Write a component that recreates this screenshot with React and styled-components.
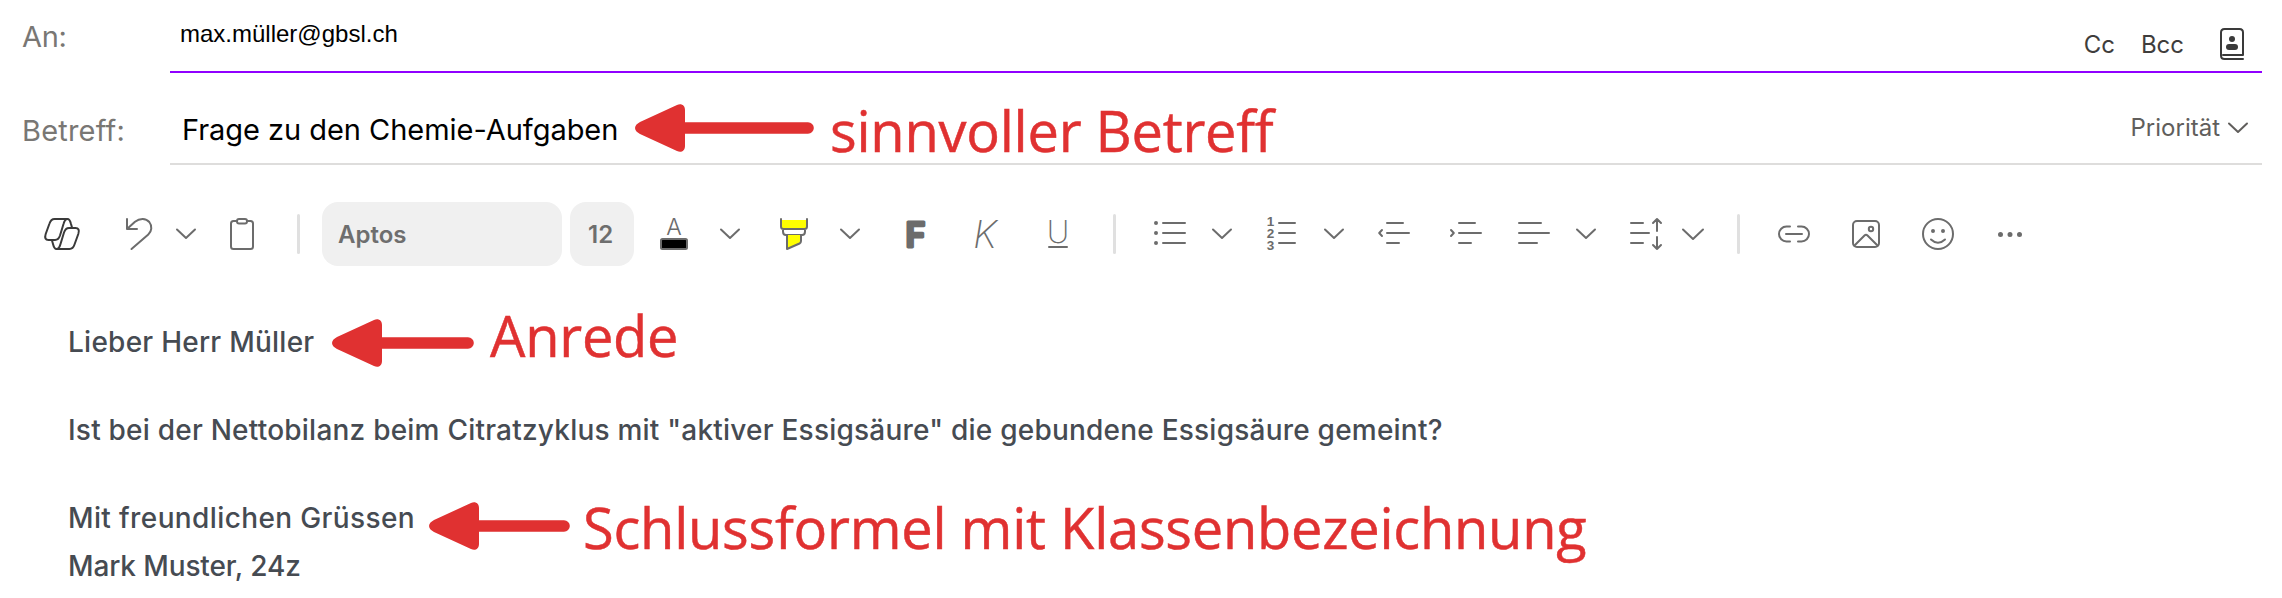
import React from "react";
import styled, { createGlobalStyle } from "styled-components";

const GlobalStyle = createGlobalStyle`
  *, *::before, *::after { box-sizing: border-box; }
  body { margin: 0; background: #fff; font-family: Inter, "Liberation Sans", sans-serif; }
`;

const Composer = styled.main`
  position: relative;
  display: flex;
  flex-direction: column;
  width: 2282px;
  height: 598px;
  overflow: hidden;
  background: #fff;
  white-space: nowrap;
`;

const HeaderRow = styled.div`
  display: flex;
  height: ${(p) => p.$height}px;
  padding-right: 20px;
`;

const Label = styled.label`
  display: flex;
  align-items: center;
  width: 170px;
  padding: ${(p) => p.$top || 0}px 0 0 22px;
  font-size: 29px;
  letter-spacing: ${(p) => p.$tracking || 0}px;
  color: #797774;
`;

const Field = styled.div`
  display: flex;
  flex: 1;
  align-items: center;
  justify-content: space-between;
  padding-top: ${(p) => p.$top || 0}px;
  border-bottom: 2px solid ${(p) => (p.$active ? "#9000ff" : "#dedddc")};
`;

const Recipient = styled.span`
  margin-bottom: 4px;
  padding-left: 10px;
  font: 24px/28px "Liberation Sans", Arial, sans-serif;
  color: #000;
`;

const Subject = styled.span`
  padding-left: 12px;
  font-size: 29px;
  line-height: 36px;
  letter-spacing: -0.04px;
  color: #000;
`;

const RecipientActions = styled.div`
  display: flex;
  align-items: center;
  margin: 17px 18px 0 0;
`;

const TextAction = styled.button`
  margin: 1px ${(p) => p.$after}px 0 0;
  padding: 0;
  border: 0;
  background: none;
  font: 24px/30px Inter, sans-serif;
  color: #3f3d3c;
`;

const Priority = styled.button`
  display: flex;
  align-items: center;
  gap: 8px;
  margin: 0 14px 4px 0;
  padding: 0;
  border: 0;
  background: none;
  font: 24px/30px Inter, sans-serif;
  color: #605e5c;
`;

const Toolbar = styled.div`
  display: flex;
  align-items: center;
  height: 64px;
  margin-top: 37px;
  padding-left: 44px;
`;

const Tool = styled.button`
  display: flex;
  flex: none;
  margin: 0 0 0 ${(p) => p.$gap || 0}px;
  padding: 0;
  border: 0;
  background: none;
  color: ${(p) => (p.$dark ? "#3a3a3a" : "#6c6c6c")};
`;

const Glyph = styled.svg`
  display: block;
  flex: none;
  overflow: visible;
  fill: none;
  stroke: currentColor;
  stroke-width: 2;
  stroke-linecap: round;
  stroke-linejoin: round;
  text { fill: currentColor; stroke: none; }
`;

const BoldGlyph = styled(Glyph)`
  text { stroke: currentColor; stroke-width: 3; }
`;

const Separator = styled.div`
  flex: none;
  width: 3px;
  height: 40px;
  margin-left: ${(p) => p.$gap}px;
  border-radius: 2px;
  background: #e0e0e0;
`;

const Picker = styled.div`
  display: flex;
  flex: none;
  align-items: center;
  width: ${(p) => p.$width}px;
  height: 64px;
  margin-left: ${(p) => p.$gap}px;
  padding-left: ${(p) => p.$inset}px;
  border-radius: 16px;
  background: #f0f0f0;
  font-size: 24px;
  font-weight: 600;
  color: #6e6e6e;
`;

const Message = styled.div`
  display: flex;
  flex-direction: column;
  gap: 40px;
  padding: 52px 0 0 68px;
  font-size: 28px;
  font-weight: 500;
  line-height: 48px;
  color: #464b52;
`;

const Paragraph = styled.p`
  margin: 0;
  letter-spacing: ${(p) => p.$tracking}px;
`;

const Line = styled.span`
  display: block;
  letter-spacing: ${(p) => p.$tracking}px;
`;

const Note = styled.div`
  position: absolute;
  left: ${(p) => p.$x}px;
  top: ${(p) => p.$y}px;
  display: flex;
  align-items: flex-start;
  gap: ${(p) => p.$gap}px;
  color: #e03131;
`;

const NoteText = styled.span`
  margin-top: ${(p) => p.$shift}px;
  font: 56px/48px "Open Sans", sans-serif;
  letter-spacing: -0.25px;
  -webkit-text-stroke: 0.5px currentColor;
`;

const Icon = ({ w, h = 32, as: Shape = Glyph, children }) => (
  <Shape width={w} height={h} viewBox={`0 0 ${w} ${h}`} aria-hidden="true">
    {children}
  </Shape>
);

const Chevron = ({ w = 20 }) => (
  <Icon w={w} h={12}>
    <path d={`M1 1.5L${w / 2} ${w / 2}L${w - 1} 1.5`} />
  </Icon>
);

const Menu = ({ gap, w }) => (
  <Tool $gap={gap} aria-label="Optionen">
    <Chevron w={w} />
  </Tool>
);

const Annotation = ({ x, y, length, gap, shift, children }) => (
  <Note $x={x} $y={y} $gap={gap}>
    <Icon w={length} h={48}>
      <path d={`M46 24H${length - 6}`} strokeWidth="11.6" />
      <path
        d="M50 6V42C50 47 46 49 42 47L5 30C-1.6 26.500-1.6 21.500 5 18L42 1C46-1 50 1 50 6Z"
        fill="currentColor"
        stroke="none"
      />
    </Icon>
    <NoteText $shift={shift}>{children}</NoteText>
  </Note>
);

const ribbon =
  "M23.500 1H10.500C8 1 6.500 2.500 5.500 5.500L1.700 16C.4 20 1.500 22 4.500 22H11C13.500 22 15 20.500 16 17.500L19.500 6C20.300 3 21.500 1 23.500 1C25.500 1 26.300 3 27 6L28 9.500";

function FormattingBar() {
  return (
    <Toolbar>
      <Tool $dark aria-label="Copilot">
        <Icon w={36}>
          <path d={ribbon} />
          <path d={ribbon} transform="rotate(180 18 16)" />
        </Icon>
      </Tool>
      <Tool $gap={46} aria-label="Rückgängig">
        <Icon w={26}>
          <path d="M1 1V11H11M1 11L9 3.700C14-.2 20 .2 23.300 4C26.500 8 25.700 13.500 22.300 16.500L5.500 31" />
        </Icon>
      </Tool>
      <Menu gap={24} />
      <Tool $gap={34} aria-label="Einfügen">
        <Icon w={24}>
          <path d="M7 3H3.500Q1 3 1 5.500V28.500Q1 31 3.500 31H20.500Q23 31 23 28.500V5.500Q23 3 20.500 3H17" />
          <rect x="7" y="1" width="10" height="4.400" rx="2" />
        </Icon>
      </Tool>
      <Separator $gap={43} />
      <Picker $width={240} $gap={22} $inset={16}>Aptos</Picker>
      <Picker $width={64} $gap={8} $inset={18}>12</Picker>
      <Tool $gap={26} aria-label="Schriftfarbe">
        <Icon w={28}>
          <text x="14" y="17" textAnchor="middle" fontFamily="Inter" fontWeight="300" fontSize="23">A</text>
          <rect x="1" y="21" width="26" height="10" rx="1.500" fill="#000" />
        </Icon>
      </Tool>
      <Menu gap={32} />
      <Tool $gap={40} aria-label="Hervorheben">
        <Icon w={28}>
          <path d="M1 2H27V10.500H1Z" fill="#ff0" stroke="none" />
          <path d="M1 1V8.500Q1 11 3.500 11H24.500Q27 11 27 8.500V1M3 11V13.500Q3 17 6 17H22Q25 17 25 13.500V11" />
          <path d="M7 17V31L19.500 25.500Q21 24.700 21 23V17" fill="#ff0" />
        </Icon>
      </Tool>
      <Menu gap={32} />
      <Tool $gap={46} aria-label="Fett">
        <Icon w={19} as={BoldGlyph}>
          <text x="-.5" y="28.500" fontFamily="Inter" fontWeight="600" fontSize="34">F</text>
        </Icon>
      </Tool>
      <Tool $gap={49} aria-label="Kursiv">
        <Icon w={26}>
          <text x="-1" y="30" fontFamily="Inter" fontWeight="200" fontStyle="italic" fontSize="38">K</text>
        </Icon>
      </Tool>
      <Tool $gap={48} aria-label="Unterstrichen">
        <Icon w={20}>
          <text x="10" y="25" textAnchor="middle" fontFamily="Inter" fontWeight="250" fontSize="31">U</text>
          <path d="M1 29H19" />
        </Icon>
      </Tool>
      <Separator $gap={45} />
      <Tool $gap={38} aria-label="Aufzählung">
        <Icon w={32}>
          <path d="M9 5H31M9 15H31M9 25H31" />
          <path d="M2 5h0M2 15h0M2 25h0" strokeWidth="4" />
        </Icon>
      </Tool>
      <Menu gap={26} />
      <Tool $gap={34} aria-label="Nummerierung">
        <Icon w={30}>
          <g fontFamily="Liberation Sans" fontWeight="700" fontSize="13.500" textAnchor="middle">
            <text x="4.500" y="8">1</text>
            <text x="4.500" y="20">2</text>
            <text x="4.500" y="32">3</text>
          </g>
          <path d="M13 5H29M13 15H29M13 25H29" />
        </Icon>
      </Tool>
      <Menu gap={28} />
      <Tool $gap={34} aria-label="Einzug verkleinern">
        <Icon w={32}>
          <path d="M9 5H25M9 15H31M9 25H21M4 12L1.200 15L4 18" />
        </Icon>
      </Tool>
      <Tool $gap={40} aria-label="Einzug vergrössern">
        <Icon w={32}>
          <path d="M9 5H25M9 15H31M9 25H21M1 12L3.800 15L1 18" />
        </Icon>
      </Tool>
      <Tool $gap={36} aria-label="Ausrichtung">
        <Icon w={32}>
          <path d="M1 5H23M1 15H31M1 25H19" />
        </Icon>
      </Tool>
      <Menu gap={26} />
      <Tool $gap={34} aria-label="Zeilenabstand">
        <Icon w={32}>
          <path d="M1 5H13M1 15H19M1 25H13M27 13V1M23 5L27 1L31 5M27 19V31M23 27L27 31L31 27" />
        </Icon>
      </Tool>
      <Menu gap={20} w={22} />
      <Separator $gap={33} />
      <Tool $gap={38} aria-label="Link">
        <Icon w={32}>
          <path d="M12 8.500H8.500a7 7 0 0 0 0 15H12M20 8.500H23.500a7 7 0 0 1 0 15H20M8 16H24" />
        </Icon>
      </Tool>
      <Tool $gap={42} aria-label="Bild">
        <Icon w={28}>
          <rect x="1" y="3" width="26" height="26" rx="4" />
          <path d="M2.500 27.500L12.500 17.500Q14 16 15.500 17.500L25.500 27.500" />
          <circle cx="19" cy="11" r="2.200" />
        </Icon>
      </Tool>
      <Tool $gap={42} aria-label="Emoji">
        <Icon w={32}>
          <circle cx="16" cy="16" r="15" />
          <path d="M9 21.500Q16 28 23 21.500" />
          <path d="M11 13h0M21 13h0" strokeWidth="4" />
        </Icon>
      </Tool>
      <Tool $gap={44} aria-label="Mehr">
        <Icon w={24}>
          <path d="M2.500 16.500h0M12 16.500h0M21.500 16.500h0" strokeWidth="5" />
        </Icon>
      </Tool>
    </Toolbar>
  );
}

export default function App() {
  return (
    <Composer>
      <GlobalStyle />
      <HeaderRow $height={73}>
        <Label $tracking={-0.3}>An:</Label>
        <Field $active>
          <Recipient>max.müller@gbsl.ch</Recipient>
          <RecipientActions>
            <TextAction $after={26}>Cc</TextAction>
            <TextAction $after={36}>Bcc</TextAction>
            <Tool $dark aria-label="Adressbuch">
              <Icon w={24}>
                <path d="M23 31H4.500Q1 31 1 27.500V4.500Q1 1 4.500 1H19.500Q23 1 23 4.500V27H3" />
                <circle cx="12" cy="11" r="3" fill="currentColor" stroke="none" />
                <rect x="6" y="16" width="12" height="6" rx="3" fill="currentColor" stroke="none" />
              </Icon>
            </Tool>
          </RecipientActions>
        </Field>
      </HeaderRow>
      <HeaderRow $height={92}>
        <Label $top={22} $tracking={0.2}>Betreff:</Label>
        <Field $top={23}>
          <Subject>Frage zu den Chemie-Aufgaben</Subject>
          <Priority>
            Priorität
            <Chevron />
          </Priority>
        </Field>
      </HeaderRow>
      <FormattingBar />
      <Message>
        <Paragraph $tracking={0.25}>Lieber Herr Müller</Paragraph>
        <Paragraph $tracking={0.22}>
          Ist bei der Nettobilanz beim Citratzyklus mit "aktiver Essigsäure" die gebundene Essigsäure gemeint?
        </Paragraph>
        <Paragraph>
          <Line $tracking={0.38}>Mit freundlichen Grüssen</Line>
          <Line $tracking={-0.12}>Mark Muster, 24z</Line>
        </Paragraph>
      </Message>
      <Annotation x={635} y={104} length={179} gap={16} shift={2}>sinnvoller Betreff</Annotation>
      <Annotation x={332} y={319} length={142} gap={16} shift={-8}>Anrede</Annotation>
      <Annotation x={429} y={502} length={141} gap={13} shift={1}>Schlussformel mit Klassenbezeichnung</Annotation>
    </Composer>
  );
}
